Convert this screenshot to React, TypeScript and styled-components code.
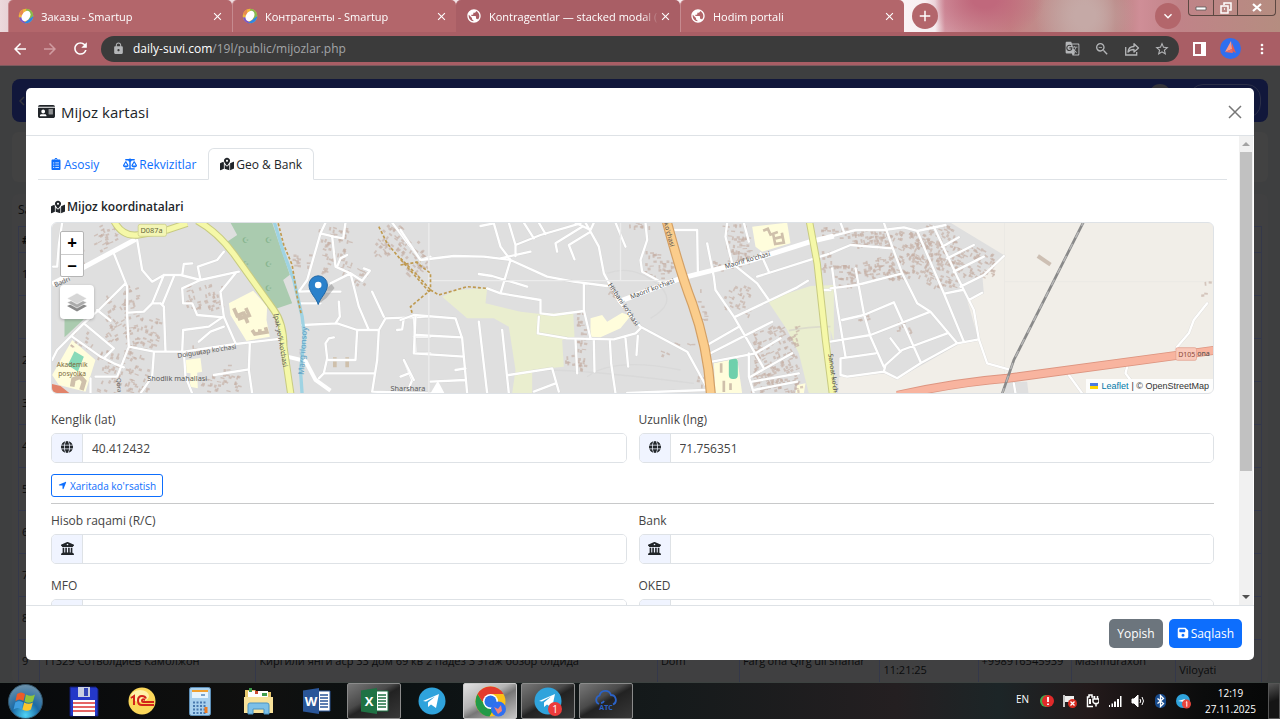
import React from "react";
import styled, { createGlobalStyle, css } from "styled-components";
import { FaIdCard, FaScaleBalanced, FaGlobe, FaBuildingColumns, FaLocationArrow, FaFloppyDisk } from "react-icons/fa6";
import { FaClipboardList, FaMapMarkedAlt } from "react-icons/fa";
import {
  MdArrowBack,
  MdArrowForward,
  MdRefresh,
  MdLock,
  MdGTranslate,
  MdZoomOut,
  MdStarBorder,
  MdPublic,
  MdClose,
  MdAdd,
  MdExpandMore,
  MdMoreVert,
} from "react-icons/md";

const GlobalStyle = createGlobalStyle`
  * { box-sizing: border-box; }
  body { margin: 0; font-family: "Open Sans", "Noto Sans", sans-serif; font-size: 12px; color: #212529; }
  button, input { font-family: inherit; }
  button { padding: 0; border: 0; background: none; color: inherit; }
`;

const Desktop = styled.div`
  display: flex;
  flex-direction: column;
  height: 100vh;
  overflow: hidden;
`;

/* ---------- browser window ---------- */

const TabStrip = styled.div`
  display: flex;
  align-items: stretch;
  height: 32px;
  flex: none;
  padding-left: 8px;
  background:
    radial-gradient(ellipse 60px 40px at 985px 0, #c0687c 0 20%, transparent),
    radial-gradient(ellipse 50px 50px at 1085px 16px, #c5a9a6 20%, transparent),
    linear-gradient(90deg, #ecd9dc 0, #e8d2d6 8px, #fbf3f5 900px, #f6eef0 935px, #d396a2 945px, #c48183 1010px, #be9390 1060px, #c4a49f 1085px, #b8807e 1115px, #cf8e97 1140px, #c08388 1180px, #b58d80 100%);
`;

const TabItem = styled.div<{ $active?: boolean }>`
  display: flex;
  align-items: center;
  flex: 0 1 224px;
  min-width: 0;
  padding: 0 8px 0 9px;
  color: #fff;
  font-size: 11px;
  background: ${(p) => (p.$active ? "#a95e65" : "#b3666b")};
  border-radius: 5px 5px 0 0;
  border-left: 1px solid ${(p) => (p.$active ? "#a95e65" : "#c68a8f")};
  svg { flex: none; }
`;

const TabTitle = styled.span`
  flex: 1;
  min-width: 0;
  margin-left: 7px;
  overflow: hidden;
  white-space: nowrap;
  mask-image: linear-gradient(90deg, #000 90%, transparent);
`;

const TabClose = styled.button`
  display: flex;
  width: 13px;
  height: 13px;
`;

const RoundButton = styled.button`
  display: grid;
  place-items: center;
  width: 26px;
  height: 26px;
  margin: 3px 0 0 8px;
  border-radius: 50%;
  background: #b3666b;
  color: #fff;
`;

const Spacer = styled.div`
  flex: 1;
`;

const WindowButtons = styled.div`
  display: flex;
  height: 16px;
  margin: 0 4px 0 7px;
  border: 1px solid #5c4842;
  border-top: 0;
  border-radius: 0 0 4px 4px;
`;

const WindowButton = styled.button<{ $wide?: boolean }>`
  display: grid;
  place-items: center;
  width: ${(p) => (p.$wide ? 38 : 24)}px;
  color: #f3ebe8;
  & + & { border-left: 1px solid #5c4842; }
`;

const Toolbar = styled.div`
  display: flex;
  align-items: center;
  height: 34px;
  flex: none;
  padding: 0 10px;
  color: #fff;
  background: #a95e65;
  border-bottom: 1px solid #7d5a5e;
`;

const NavButton = styled.button<{ $dim?: boolean }>`
  display: grid;
  place-items: center;
  width: 20px;
  height: 20px;
  margin-right: 10px;
  color: ${(p) => (p.$dim ? "#d09ca1" : "#fff")};
`;

const AddressBar = styled.div`
  display: flex;
  align-items: center;
  flex: 1;
  height: 26px;
  margin-left: 1px;
  padding: 0 9px 0 11px;
  border-radius: 13px;
  background: #3b3b3b;
  color: #b4b6b8;
`;

const AddressText = styled.span`
  flex: 1;
  margin-left: 8px;
  font-size: 12px;
  color: #a3a5a8;
  b { font-weight: 400; color: #fff; }
`;

const AddressActions = styled.div`
  display: flex;
  gap: 14px;
  button { display: flex; }
`;

const ToolbarEnd = styled.div`
  display: flex;
  align-items: center;
  gap: 13px;
  margin-left: 13px;
  button { display: flex; }
`;

/* ---------- page under the dialog ---------- */

const Page = styled.main`
  position: relative;
  flex: 1;
  min-height: 0;
  overflow: hidden;
  padding: 13px 12px 0;
  background: #3e3f40;
`;

const SiteNav = styled.div`
  display: flex;
  align-items: center;
  justify-content: space-between;
  height: 43px;
  padding: 0 7px;
  border-radius: 8px;
  background: #11173b;
  color: #34363d;
`;

const SiteAccount = styled.div`
  display: flex;
  gap: 18px;
`;

const Avatar = styled.span`
  width: 22px;
  height: 34px;
  border-radius: 11px;
  background: #34343a;
`;

const AccountButton = styled.span`
  width: 72px;
  height: 34px;
  border: 1px solid #2b2f48;
  border-radius: 14px;
`;

const FilterCard = styled.div`
  height: 50px;
  margin: 10px 0 12px;
  border-radius: 6px;
  background: #424242;
`;

const TableCard = styled.div`
  padding: 0 6px;
  border-radius: 6px;
  background: #404041;
  color: #0b0c0d;
`;

const TableTools = styled.div`
  height: 32px;
  line-height: 32px;
`;

const ClientTable = styled.table`
  width: 100%;
  table-layout: fixed;
  border-collapse: collapse;
  font-size: 11px;
  line-height: 18px;
  th, td { height: 43px; padding: 0 3px; text-align: left; border: 1px solid #34384a; }
  th { height: 26px; }
`;

/* ---------- dialog ---------- */

const Dialog = styled.section`
  position: absolute;
  inset: 22px 26px;
  display: flex;
  flex-direction: column;
  border-radius: 5px;
  background: #fff;
  overflow: hidden;
`;

const DialogHeader = styled.header`
  display: flex;
  align-items: center;
  justify-content: space-between;
  height: 48px;
  flex: none;
  padding: 0 12px;
  border-bottom: 1px solid #dee2e6;
`;

const DialogTitle = styled.h1`
  display: flex;
  align-items: center;
  gap: 6px;
  margin: 0;
  font-size: 15px;
  font-weight: 400;
`;

const CloseButton = styled.button`
  display: flex;
  color: #777;
`;

const DialogMain = styled.div`
  display: flex;
  flex: 1;
  min-height: 0;
`;

const DialogBody = styled.div`
  flex: 1;
  min-width: 0;
  overflow-y: auto;
  scrollbar-width: none;
  padding: 12px 12px 0;
`;

const ScrollTrack = styled.div`
  display: flex;
  flex-direction: column;
  align-items: center;
  width: 14px;
  margin-right: 1px;
  background: #f1f1f1;
`;

const ScrollThumb = styled.div`
  flex: 0 0 68%;
  width: 12px;
  background: #c1c1c1;
`;

const ScrollArrow = styled.span<{ $down?: boolean }>`
  height: 16px;
  display: grid;
  place-items: center;
  margin-top: ${(p) => (p.$down ? "auto" : "0")};
  &::before {
    content: "";
    border: 4px solid transparent;
    ${(p) =>
      p.$down
        ? css`border-top-color: #505050; border-bottom: 0;`
        : css`border-bottom-color: #a3a3a3; border-top: 0;`}
  }
`;

const NavTabs = styled.nav`
  display: flex;
  height: 32px;
  border-bottom: 1px solid #dee2e6;
`;

const NavTab = styled.a<{ $active?: boolean }>`
  display: flex;
  align-items: center;
  gap: 2px;
  height: 32px;
  padding: 0 11px;
  font-size: 12px;
  text-decoration: none;
  border: 1px solid transparent;
  border-radius: 6px 6px 0 0;
  color: #0d6efd;
  ${(p) =>
    p.$active &&
    css`
      color: #212529;
      background: #fff;
      border-color: #dee2e6 #dee2e6 #fff;
    `}
`;

const TabPane = styled.div`
  padding: 18px 13px 0;
`;

const SectionTitle = styled.h2`
  display: flex;
  align-items: center;
  gap: 2px;
  margin: 0 0 6px;
  font-size: 12px;
  line-height: 18px;
  font-weight: 600;
`;

const MapBox = styled.div`
  position: relative;
  height: 172px;
  border: 1px solid #dee2e6;
  border-radius: 6px;
  overflow: hidden;
  > svg { display: block; width: 100%; height: 100%; }
`;

const MapControls = styled.div`
  position: absolute;
  left: 8px;
  top: 8px;
  display: grid;
  gap: 8px;
`;

const ZoomGroup = styled.div`
  width: 24px;
  border: 1px solid #b5b5b5;
  border-radius: 2px;
  background: #fff;
  button {
    display: block;
    width: 22px;
    height: 22px;
    font-size: 17px;
    line-height: 20px;
    font-weight: 700;
    color: #000;
  }
  button + button { border-top: 1px solid #ccc; }
`;

const LayersButton = styled.button`
  display: grid;
  place-items: center;
  width: 34px;
  height: 34px;
  border-radius: 4px;
  background: #fff;
  box-shadow: 0 1px 3px rgba(0, 0, 0, 0.25);
`;

const Attribution = styled.div`
  position: absolute;
  right: 0;
  bottom: 0;
  display: flex;
  align-items: center;
  gap: 3px;
  height: 14px;
  padding: 0 4px;
  background: rgba(255, 255, 255, 0.85);
  font-family: "Liberation Sans", Arial, sans-serif;
  font-size: 9px;
  color: #333;
  a { color: #0078a8; text-decoration: none; }
`;

const FieldGrid = styled.div`
  display: grid;
  grid-template-columns: 1fr 1fr;
  gap: 13px 12px;
`;

const CoordFields = styled(FieldGrid)`
  margin: 17px 0 11px;
`;

const Field = styled.div`
  label { display: block; height: 22px; line-height: 18px; color: #444; }
`;

const InputGroup = styled.div`
  display: flex;
  height: 30px;
  border: 1px solid #dee2e6;
  border-radius: 5px;
  overflow: hidden;
`;

const InputIcon = styled.span`
  display: grid;
  place-items: center;
  width: 31px;
  padding-bottom: 2px;
  background: #f0f4ff;
  border-right: 1px solid #dee2e6;
`;

const TextInput = styled.input`
  flex: 1;
  min-width: 0;
  padding: 0 9px;
  border: 0;
  outline: 0;
  font-size: 12px;
  color: #444;
`;

const ShowOnMap = styled.button`
  display: flex;
  align-items: center;
  gap: 3px;
  height: 23px;
  padding: 0 6px;
  font-size: 10px;
  color: #0d6efd;
  border: 1px solid #0d6efd;
  border-radius: 3px;
`;

const Divider = styled.hr`
  margin: 6px 0 8px;
  border: 0;
  border-top: 1px solid #c8c9ca;
`;

const DialogFooter = styled.footer`
  display: flex;
  align-items: center;
  justify-content: flex-end;
  gap: 6px;
  height: 55px;
  flex: none;
  padding: 0 12px;
  border-top: 1px solid #dee2e6;
`;

const ActionButton = styled.button<{ $primary?: boolean }>`
  display: flex;
  align-items: center;
  gap: 2px;
  height: 29px;
  padding: 0 8px;
  font-size: 12px;
  color: #fff;
  border-radius: 5px;
  background: ${(p) => (p.$primary ? "#0d6efd" : "#6c757d")};
`;

/* ---------- taskbar ---------- */

const Taskbar = styled.div`
  display: flex;
  align-items: center;
  height: 37px;
  flex: none;
  color: #fff;
  border-top: 1px solid #3c4240;
  background: linear-gradient(90deg, #07090b, #10100f 20%, #0b1112 30%, #151a1b 52%, #241f21 70%, #1c2527 78%, #231a1b 85%, #0b0c0c 94%, #060707);
`;

const StartButton = styled.button`
  display: flex;
  margin: 0 14px 0 8px;
`;

const TaskList = styled.div`
  display: flex;
  gap: 4px;
`;

const Task = styled.button<{ $open?: boolean; $active?: boolean }>`
  display: grid;
  place-items: center;
  width: 54px;
  height: 36px;
  border: 1px solid transparent;
  border-radius: 2px;
  ${(p) =>
    p.$open &&
    css`
      border-color: #8b8b8b;
      background: linear-gradient(150deg, #777 0, #4a4a4a 40%, #222 52%, #383838);
    `}
  ${(p) =>
    p.$active &&
    css`
      border-color: #c9c9c9;
      background: linear-gradient(150deg, #e2e2e2 0, #b4b4b4 40%, #777 55%, #c6c6c6);
    `}
`;

const Tray = styled.div`
  display: flex;
  align-items: center;
  gap: 9px;
  font-size: 11px;
  svg { display: block; }
`;

const TrayLanguage = styled.span`
  margin: 0 2px 4px 0;
  font-size: 10px;
`;

const Clock = styled.div`
  margin: 0 12px 0 14px;
  text-align: center;
  font-size: 10px;
  line-height: 16px;
`;

const ShowDesktop = styled.button`
  width: 12px;
  height: 36px;
  border: 1px solid #555;
  background: linear-gradient(160deg, #555, #151515 50%);
`;

/* ---------- drawings ---------- */

const SmartupIcon = () => (
  <svg width="16" height="16" viewBox="0 0 16 16">
    <circle cx="8" cy="8" r="7.300" fill="#f0b63c" />
    <path d="M8 .7a7.300 7.300 0 0 1 7.300 7.300l-4.300 4z" fill="#86b84e" />
    <path d="M15.300 8a7.300 7.300 0 0 1-9.500 7l4.200-3z" fill="#2f86e4" />
    <path d="M.9 9.500a7.300 7.300 0 0 0 6.300 5.800l-2-6z" fill="#7a58c8" />
    <path d="M1 6a7.300 7.300 0 0 1 4-4.600L5 8z" fill="#e88a50" />
    <ellipse cx="8" cy="8" rx="4" ry="5.600" transform="rotate(32 8 8)" fill="#fff" />
  </svg>
);

const ShareIcon = () => (
  <svg width="16" height="16" viewBox="0 0 16 16" fill="none" stroke="currentColor" strokeWidth="1.300">
    <path d="M1.700 6v8h11v-3" />
    <path d="M4 11q.5-5.500 6-5.500V2.700L14.500 7 10 11V8.500Q6 8.500 4 11z" strokeLinejoin="round" />
  </svg>
);

const ProfileIcon = () => (
  <svg width="21" height="21" viewBox="0 0 21 21">
    <circle cx="10.500" cy="10.500" r="10.500" fill="#2f6ff0" />
    <path d="M11 3l1 8-7 3z" fill="#ff9a86" />
    <path d="M12 5l4 10-4-2z" fill="#e25b50" />
    <path d="M5 14l7-3 1 4z" fill="#f0695c" />
  </svg>
);

const StartOrb = () => (
  <svg width="35" height="35" viewBox="0 0 35 35">
    <defs>
      <radialGradient id="orb" cx=".5" cy=".9" r=".9">
        <stop offset="0" stopColor="#4fd4f7" />
        <stop offset=".45" stopColor="#1c6aa5" />
        <stop offset="1" stopColor="#6f93ab" />
      </radialGradient>
    </defs>
    <circle cx="17.500" cy="17.500" r="17" fill="url(#orb)" stroke="#34566b" />
    <path d="M9 10q4-3 8 0l-1.500 7q-4-3-8 0z" fill="#ee5c28" />
    <path d="M18 10.500q5 2.500 9 0l-2 7q-4 2.500-8.500 0z" fill="#8fc43c" />
    <path d="M7.200 18.500q4-3 8 0l-1.700 7q-4-3-8 0z" fill="#3f9ee0" />
    <path d="M16.200 18.500q4.500 2.500 8.700 0l-2 7q-4 2.500-8.500 0z" fill="#fbc62d" />
  </svg>
);

const FloppyTask = () => (
  <svg width="30" height="31" viewBox="0 0 30 31">
    <path d="M1 1h26l2 2v27H1z" fill="#2438c8" stroke="#101c70" />
    <path d="M9 1h12v10H9z" fill="#c9cfe0" />
    <path d="M15 2h4v8h-4z" fill="#3346b8" />
    <path d="M4 14h22v16H4z" fill="#fff" />
    <path d="M4 17h22M4 21h22M4 25h22" stroke="#d33" strokeWidth="1.500" />
  </svg>
);

const OneCTask = () => (
  <svg width="28" height="28" viewBox="0 0 28 28">
    <circle cx="14" cy="14" r="13.500" fill="#fbd75a" />
    <ellipse cx="12" cy="9" rx="9" ry="6" fill="#fff2a8" />
    <path d="M3 11l3-2v9M18 11.500q-1-2.500-4-2.500-4 0-4 4.500t4 4.500h12M17 13q-3-1.500-3 .5t3 1.500h9" fill="none" stroke="#d3241a" strokeWidth="2" />
  </svg>
);

const CalculatorTask = () => (
  <svg width="22" height="29" viewBox="0 0 22 29">
    <rect x=".5" y=".5" width="21" height="28" rx="2" fill="#a8d0ee" stroke="#5d8fb8" />
    <rect x="3" y="3" width="16" height="8" fill="#e8f4fc" />
    <path d="M3 4h16" stroke="#f0a030" strokeWidth="2" />
    <path d="M12 7h4v2h-4z" fill="#7aa4cc" />
    <path d="M4 15.500h14M4 19h14M4 22.500h14M4 26h14" stroke="#4879ae" strokeWidth="2" strokeDasharray="2 1.500" />
    <path d="M17 20v6" stroke="#ee7a20" strokeWidth="3" />
  </svg>
);

const FolderTask = () => (
  <svg width="31" height="29" viewBox="0 0 31 29">
    <path d="M2 3h10l2 2h14v21H2z" fill="#e8c86c" />
    <path d="M5 4h20v6H5z" fill="#fff" />
    <path d="M6 1h3v4H6zM19 6h5v3h-5z" fill="#3f9d4c" />
    <path d="M12 4h3v3h-3z" fill="#cf4a30" />
    <path d="M1 10h29v16H1z" fill="#f8e29a" />
    <path d="M5 27v-9q0-2 2-2h17q2 0 2 2v9h-5v-5H10v5z" fill="#7cc0e8" stroke="#4a94c4" />
  </svg>
);

const OfficeTask = ({ letter, color }: { letter: string; color: string }) => (
  <svg width="29" height="28" viewBox="0 0 29 28">
    <path d="M15 4h13v20H15z" fill="#fff" stroke={color} />
    <path d="M18 8h8M18 11h8M18 14h8M18 17h8M18 20h8" stroke={color} strokeWidth="1.500" />
    <path d="M1 3.500L17 1v26L1 24.500z" fill={color} />
    <text x="9" y="19" fontSize="13" fontWeight="700" textAnchor="middle" fill="#fff">{letter}</text>
  </svg>
);

const TelegramTask = ({ badge }: { badge?: boolean }) => (
  <svg width="29" height="29" viewBox="0 0 29 29">
    <circle cx="14" cy="14" r="13.500" fill="#2fa3dc" />
    <path d="M5 14l16-7-3 14-5-3.500-3 2.500v-4.500l7-6-9 5z" fill="#fff" />
    {badge && (
      <>
        <circle cx="21" cy="22" r="7" fill="#ec3b3b" />
        <text x="21" y="26" fontSize="10" textAnchor="middle" fill="#fff">1</text>
      </>
    )}
  </svg>
);

const ChromeTask = () => (
  <svg width="31" height="31" viewBox="0 0 31 31">
    <circle cx="15.500" cy="15.500" r="15" fill="#fbc116" />
    <path d="M2.500 8A15 15 0 0 1 28.500 8H15.500z" fill="#e33b2e" />
    <path d="M2.500 8a15 15 0 0 0 12 22.500l6-11L9 18z" fill="#229a48" />
    <path d="M2.500 8h13v7H7z" fill="#e33b2e" />
    <circle cx="15.500" cy="15.500" r="7.500" fill="#fff" />
    <circle cx="15.500" cy="15.500" r="6" fill="#2b73e8" />
    <circle cx="23.500" cy="23" r="7.500" fill="#2f6ff0" />
    <path d="M19 21l4 2 3-4 1 6-4 3z" fill="#f48375" />
  </svg>
);

const CloudTask = () => (
  <svg width="24" height="22" viewBox="0 0 24 22">
    <path d="M5 14a4.500 4.500 0 0 1 .5-8.500A6 6 0 0 1 17 5a5 5 0 0 1 2 9.500M7 13q2 0 3-2" fill="none" stroke="#2b63c8" strokeWidth="1.800" />
    <text x="12" y="20" fontSize="7" fontWeight="700" textAnchor="middle" fill="#2b63c8">ATC</text>
  </svg>
);

const LayersIcon = () => (
  <svg width="22" height="22" viewBox="0 0 22 22">
    <path d="M1 15l10-4.500L21 15l-10 5.500z" fill="#8a8a8a" />
    <path d="M1 11.500L11 7l10 4.500L11 17z" fill="#ababab" stroke="#fff" strokeWidth=".6" />
    <path d="M1 7.500L11 2l10 5.500L11 13z" fill="#d6d6d6" stroke="#fff" strokeWidth=".6" />
  </svg>
);

const FlagIcon = () => (
  <svg width="8" height="6" viewBox="0 0 8 6">
    <path d="M0 0h8v3H0z" fill="#4c7be1" />
    <path d="M0 3h8v3H0z" fill="#ffd500" />
  </svg>
);

/* Building blocks: x, y, width, height of the quarter, how many houses, street angle. */
const quarters: number[][] = [
  [92, 226, 24, 26, 26, -25], [60, 250, 22, 20, 8, -25], [122, 286, 14, 62, 40, -15], [104, 296, 24, 50, 40, -35],
  [136, 310, 24, 38, 30, 20], [96, 350, 52, 42, 80, 20], [70, 330, 26, 16, 10, 35],
  [184, 284, 38, 26, 40, -20], [176, 345, 40, 8, 8, -10], [200, 374, 38, 18, 30, 15], [292, 254, 18, 12, 12, 0],
  [318, 226, 34, 46, 60, 15], [352, 268, 14, 18, 10, 30], [374, 224, 30, 30, 46, 40], [402, 240, 26, 34, 34, 40],
  [576, 312, 8, 60, 32, 5], [564, 352, 8, 12, 7, 0], [607, 284, 8, 12, 8, 30], [642, 250, 16, 26, 18, 0],
  [658, 260, 16, 18, 16, 0], [628, 222, 20, 6, 8, 0], [722, 224, 26, 42, 60, 5], [712, 260, 14, 14, 8, 0],
  [724, 284, 26, 30, 28, 25], [752, 326, 44, 60, 150, -25], [750, 378, 50, 14, 40, -10], [690, 288, 14, 60, 14, 0],
  [655, 338, 34, 16, 6, 20], [696, 376, 10, 10, 5, 0], [820, 250, 10, 20, 14, 0], [820, 226, 28, 12, 22, 0],
  [850, 230, 40, 16, 60, -10], [888, 230, 40, 48, 130, 25], [926, 224, 30, 62, 130, 25], [956, 246, 38, 30, 70, 30],
  [832, 262, 26, 24, 50, 5], [862, 258, 36, 22, 56, -10], [850, 314, 20, 6, 8, -15], [896, 320, 16, 14, 10, -15],
  [1202, 281, 8, 3, 2, 0], [1200, 292, 4, 4, 2, 0], [213, 364, 16, 6, 3, 0],
];

const houses = (() => {
  let seed = 7;
  const next = () => (seed = (seed * 16807) % 2147483647) / 2147483647;
  return quarters.flatMap(([x, y, w, h, n, a]) =>
    Array.from({ length: n }, () => {
      const wide = 1.500 + next() * 3;
      return { x: x + next() * w, y: y + next() * h, w: wide, h: 5.500 - wide, a: a + (next() - 0.5) * 14 };
    }),
  );
})();

const westRoads =
  "M185 278L175 345 170 410 158 410M340 370L380 470 380 560 385 650 350 740 285 740M410 330L425 420 455 455 490 435 540 435 600 450 690 430 715 425M545 437L550 402 575 400M670 365L650 390 592 410 600 450M545 475L600 450M545 475L548 520 575 520 590 555 670 562M705 430L660 485 670 560 705 640M520 440L485 525M480 520L455 520 430 545 385 548M490 435L455 520M480 520L490 530 495 665M375 460L295 540 250 580 170 660 155 690M250 580L340 655 310 685M290 540L330 572M215 620L300 680 340 700 370 712M385 650L460 665 550 665 705 642 850 625M545 665L548 600 625 590 665 562M595 635L630 605 670 590M748 640L745 720 755 790M640 735L745 718M550 665L555 740 575 790M460 670L455 740 420 790M980 685L975 640 985 625 1000 622M980 685L970 730 955 745M970 730L1120 730M1070 600L1065 690 985 690M905 585L1010 580 1070 600 1135 600 1155 565 1290 560M1135 600L1130 690 1115 785 1290 790M975 278L960 310 940 380 920 450 895 485 950 483M960 310L1000 320 1028 325 1035 278M995 320L1005 410 1050 430 1085 452 1108 422 1090 415M1010 410L1020 385 1040 375M1050 430L990 460M1050 430L1075 530 1105 600M1115 485L1150 560M900 520L960 520M1015 515L1018 560 1005 580M975 485L1020 485M1175 278L1260 390 1290 380M1190 600L1205 598 1210 565M1240 560L1245 670 1290 670M1240 620L1290 620M1210 690L1235 750 1225 775M270 745L270 790";

const centreRoads =
  "M0 60L60 150 160 138 250 140 330 150 440 200 520 215 620 228M240 48L280 40 300 110 330 150M300 145L390 125M345 105L345 138M345 105L420 75 540 40M325 38L345 105M370 38L400 85M415 38L435 72M330 150L300 250M235 192L275 198 380 230M260 235L300 250 420 270 420 310 460 315 550 303M415 320L412 370 500 385 640 388 705 370 720 355M550 220L550 300 570 385M555 38L595 110 610 190 655 275 720 350 860 425 915 525M525 38L570 60 580 38M570 65L505 105 522 148M545 50L465 100 470 125M645 38L675 110M735 38L740 90 720 150 725 185 780 215M820 60L890 60 892 185M920 100L940 200 945 240 1000 320 1090 475M980 38L975 80 995 160 1070 220 1105 270M1005 320L1190 232 1222 212M1030 38L1045 95M1080 130L1105 185M1070 200L1290 130M1270 240L1290 240M920 405L1015 350M930 430L1115 335M935 455L1065 430 1140 385M1050 500L1175 430M1055 515L1195 490M1060 540L1190 515M1045 430L1045 500 1060 550M235 335L260 550M305 360L325 550M0 330L40 315 165 325 185 385 200 550M45 318L40 430 190 440M48 375L185 382M90 515L195 510M165 480L195 475M0 500L25 490M10 450L40 510M325 495L455 475 475 545M400 545L465 520M525 390L530 490M580 390L582 485M628 390L632 460 645 550M675 385L683 470M712 378L708 435M680 549L915 540";

const eastRoads =
  "M0 320L75 300 160 300 220 292 260 303 345 285M0 370L60 345 185 355M160 278L185 350 215 430 260 520 300 545 380 640M0 475L80 465 215 430M5 415L20 530 45 680M75 415L100 550 120 620 160 710M35 570L100 555 190 517 270 695M0 635L120 615 300 545M30 685L135 670M30 685L30 735 50 740 160 725M160 725L200 745 270 700 380 640 445 628M160 725L165 705 215 660 350 610M260 303L340 490 400 635M310 290L380 440 430 540 445 628 470 700 535 718M335 350L385 322M350 385L430 345M370 425L460 380M390 470L460 435 520 378M345 490L395 480M415 510L455 488M180 625L210 665M30 278L40 305M1130 520L1090 570 1075 610 1040 650 1035 670M890 710L885 730 900 750M715 735L755 790M550 760L555 790";

const west = "translate(0 130) scale(.33333)";
const centre = "translate(400 210) scale(.33333)";
const east = "translate(830 130) scale(.33333)";

const StreetMap = () => (
  <svg viewBox="51 223 1162 170" preserveAspectRatio="xMidYMid slice" fontFamily="Noto Sans" fill="none">
    <rect x="0" y="200" width="1280" height="220" fill="#dfdfdf" />
    <g transform={west}>
      <path d="M690 278H815L868 434 848 450 875 520 822 538 680 335 710 315z" fill="#aacbaf" />
      <path d="M192 568h58l-58 54z" fill="#aacbaf" />
      <path d="M685 520L758 482 800 530 798 570 808 620 738 633 690 555zM215 630L285 690 255 785 175 765 155 735zM555 690L600 684 605 725 590 728 592 775 568 770 570 730 556 728z" fill="#fffddc" />
      <path d="M222 664L250 680 232 725 202 705z" fill="#88dab9" />
      <path d="M153 762L180 768 210 792H153z" fill="#e2836a" />
      <path d="M700 535l10 22 20-8M712 568l34-12-10-22M728 545l14 34M755 600l8 12 36-6-4-14M778 598v10M1003 682v30M1040 682v30" stroke="#cfc0ab" strokeWidth="11" />
      <path d="M215 770l4-22 20-8 12 14-8 26" stroke="#cfc0ab" strokeWidth="14" />
      <g fill="#86b48d" fontSize="24">
        <text x="724" y="340">☪</text>
        <text x="795" y="340">☪</text>
        <text x="724" y="412">☪</text>
        <text x="795" y="412">☪</text>
        <text x="795" y="482">☪</text>
      </g>
    </g>
    <g transform={centre}>
      <path d="M125 260L165 240 260 235 255 280 360 305 420 312 518 305 522 380 485 390 490 470 395 480 395 550 335 550 345 480 325 350 280 325 200 325zM1100 270L1230 228 1300 225V550H1225L1195 430 1160 360z" fill="#eaeecf" />
      <path d="M570 325L605 315 620 335 665 308 690 318 660 355 600 382 570 380zM1055 50L1160 38 1170 100 1085 125 1065 110zM940 460L1010 445 1025 550 945 550zM1190 525L1215 520 1210 550 1185 550z" fill="#fffddc" />
      <rect x="985" y="445" width="27" height="62" rx="12" fill="#6fd0ac" />
      <path d="M1165 362Q1220 350 1290 350" stroke="#dcdccc" strokeWidth="5" />
      <path d="M1088 62l14-6 8 18 22-8M1118 72l6 30 26-4-6-30M1122 86l24-6M962 460v28M970 512v34M990 520v20" stroke="#cfc0ab" strokeWidth="8" />
      <path d="M430 480Q560 480 880 520M560 500Q640 440 840 480M620 190q80-30 160 40 50 50-30 95" stroke="#d9d9d9" strokeWidth="4" />
    </g>
    <g transform={east}>
      <path d="M360 278L520 375 455 430 460 490 410 510 445 632 385 642 200 748 160 730 25 742 22 800H1200V270z" fill="#f1eee8" />
      <path d="M530 755H590L595 800H515z" fill="#dfdfdf" />
      <path d="M0 600L22 680V800H0z" fill="#dfdfdf" />
      <path d="M522 278V790M522 455H1150" stroke="#ebe9e4" strokeWidth="3" />
      <path d="M622 378L660 404" stroke="#cdbfb3" strokeWidth="12" />
    </g>
    <g fill="#c4afa4">
      {houses.map((b, i) => (
        <rect key={i} x={b.x} y={b.y} width={b.w} height={b.h} opacity=".65" transform={`rotate(${b.a} ${b.x} ${b.y})`} />
      ))}
    </g>
    <g strokeLinejoin="round" strokeLinecap="round">
      {[
        [west, westRoads],
        [centre, centreRoads],
        [east, eastRoads],
      ].map(([place, roads]) => (
        <g key={place} transform={place}>
          <path d={roads} stroke="#cfcfcf" strokeWidth="9" opacity=".6" />
          <path d={roads} stroke="#fff" strokeWidth="7" />
        </g>
      ))}
    </g>
    <g transform={centre} stroke="#ececec" strokeWidth="4">
      <path d="M85 38V550M660 38V212M85 212H830" />
    </g>
    <g transform={west}>
      <path d="M155 462L250 412 405 328" stroke="#fff" strokeWidth="15" />
      <path d="M860 680L915 693 945 750 990 782" stroke="#fff" strokeWidth="12" />
      <path d="M822 278L850 370 880 450 905 560 912 620 900 720 905 795" stroke="#9fd3e3" strokeWidth="10" />
      <path d="M833 280L850 345 875 405 890 500 903 555M1135 290L1160 340 1210 400 1255 450 1290 490M1200 405L1260 395" stroke="#bf9a50" strokeWidth="5" strokeDasharray="9 6" />
      {[["#c8cb82", 22], ["#f5f8a8", 16]].map(([c, w]) => (
        <path key={c} d="M340 272Q365 320 410 315L500 300 560 280M590 272Q650 305 700 372L820 540Q850 580 850 650L872 800" stroke={c} strokeWidth={w} />
      ))}
      <rect x="413" y="283" width="85" height="36" rx="6" fill="#f3f5b4" stroke="#c9cb80" strokeWidth="2" />
      <g fill="#5a5a5a" fontSize="22">
        <text x="420" y="310" fill="#66683a">D087a</text>
        <text x="440" y="752">Shodlik mahallasi</text>
        <text x="1170" y="782">Sharshara</text>
        <text transform="translate(532 684) rotate(-9)" fontSize="20">Doiguutap ko'chasi</text>
        <text transform="translate(165 472) rotate(-25)" fontSize="20">Badri</text>
        <text transform="translate(820 552) rotate(80)" fontSize="20">Ipak yo'li ko'chasi</text>
        <text transform="translate(910 735) rotate(-86)" fontSize="24" fill="#5c9fc4">Marg'ilonsoy</text>
        <text transform="translate(348 745) rotate(86)" fontSize="18">Qora</text>
        <text x="215" y="712" fontSize="20" textAnchor="middle" fill="#7d6a3c">Akademik</text>
        <text x="215" y="738" fontSize="20" textAnchor="middle" fill="#7d6a3c">posyolka</text>
      </g>
    </g>
    <g transform={centre}>
      <path d="M90 550L112 512 132 550z" fill="#fff" />
      <path d="M0 145L45 190 90 240M45 155L90 190 90 240 30 290 35 310M90 240L115 255 200 230 260 235" stroke="#bf9a50" strokeWidth="5" strokeDasharray="9 6" />
      <path d="M655 275L840 205 1040 155 1230 95 1300 78" stroke="#fff" strokeWidth="15" />
      {[["#d3a065", 30], ["#fbcd8c", 23]].map(([c, w]) => (
        <path key={c} d="M795 20Q840 190 875 280Q925 420 932 570" stroke={c} strokeWidth={w} />
      ))}
      {[["#c8cb82", 22], ["#f5f8a8", 16]].map(([c, w]) => (
        <path key={c} d="M1226 30L1250 160 1275 390 1298 570" stroke={c} strokeWidth={w} />
      ))}
      <g fill="#4d4d4d" fontSize="20">
        <text transform="translate(790 40) rotate(75)">ko'chasi</text>
        <text transform="translate(692 268) rotate(-21)">Maorif ko'chasi</text>
        <text transform="translate(975 176) rotate(-16)">Maorif ko'chasi</text>
        <text transform="translate(622 225) rotate(56)">Hisbani ko'chasi</text>
        <text transform="translate(1283 432) rotate(82)">Sanoat ko'chasi</text>
      </g>
    </g>
    <g transform={east}>
      {[["#dd9580", 27], ["#f8b49f", 22]].map(([c, w]) => (
        <path key={c} d="M200 796Q380 757 530 745L1160 660" stroke={c} strokeWidth={w} />
      ))}
      <path d="M762 270L550 690 512 800" stroke="#8a8a8a" strokeWidth="8" />
      <path d="M762 270L550 690 512 800" stroke="#b8b8b8" strokeWidth="4" strokeDasharray="20 20" />
      <rect x="1036" y="653" width="62" height="38" rx="5" fill="#f9c9ba" stroke="#df9c88" strokeWidth="2" />
      <text x="1043" y="682" fontSize="21" fill="#8c4a38">D105</text>
      <text x="1100" y="678" fontSize="21" fill="#4d4d4d">ona</text>
    </g>
    <path d="M318 304l8-6 8-10-3-4-9 8z" fill="#777" opacity=".4" />
    <path d="M317.700 304.500C316 298 308.500 292.500 308.500 285a9.200 9.200 0 0 1 18.400 0C326.900 292.500 319.400 298 317.700 304.500z" fill="#2a81cb" stroke="#2268a5" />
    <circle cx="317.700" cy="285" r="3.300" fill="#fff" />
  </svg>
);

/* ---------- parts with content ---------- */

const browserTabs = [
  { title: "Заказы - Smartup", smartup: true },
  { title: "Контрагенты - Smartup", smartup: true },
  { title: "Kontragentlar — stacked modal (", active: true },
  { title: "Hodim portali" },
];

const BrowserTabs = () => (
  <TabStrip>
    {browserTabs.map((t) => (
      <TabItem key={t.title} $active={t.active}>
        {t.smartup ? <SmartupIcon /> : <MdPublic size={16} />}
        <TabTitle>{t.title}</TabTitle>
        <TabClose aria-label="Close tab"><MdClose size={13} /></TabClose>
      </TabItem>
    ))}
    <RoundButton aria-label="New tab"><MdAdd size={18} /></RoundButton>
    <Spacer />
    <RoundButton aria-label="Search tabs"><MdExpandMore size={16} /></RoundButton>
    <WindowButtons>
      <WindowButton aria-label="Minimize">
        <svg width="12" height="6"><path d="M1 2h10v3H1z" fill="#fff" stroke="#555" strokeWidth=".8" /></svg>
      </WindowButton>
      <WindowButton aria-label="Restore">
        <svg width="12" height="12" fill="none" stroke="#fff" strokeWidth="1.500"><path d="M4 3V1h7v7H9M1 4h7v7H1zM4 7h1" /></svg>
      </WindowButton>
      <WindowButton $wide aria-label="Close">
        <svg width="10" height="9"><path d="M1 1l8 7M9 1L1 8" stroke="#fff" strokeWidth="2.200" /></svg>
      </WindowButton>
    </WindowButtons>
  </TabStrip>
);

const BrowserToolbar = () => (
  <Toolbar>
    <NavButton aria-label="Back"><MdArrowBack size={18} /></NavButton>
    <NavButton $dim aria-label="Forward"><MdArrowForward size={18} /></NavButton>
    <NavButton aria-label="Reload"><MdRefresh size={19} /></NavButton>
    <AddressBar>
      <MdLock size={13} />
      <AddressText><b>daily-suvi.com</b>/19l/public/mijozlar.php</AddressText>
      <AddressActions>
        <button aria-label="Translate"><MdGTranslate size={15} /></button>
        <button aria-label="Zoom"><MdZoomOut size={16} /></button>
        <button aria-label="Share"><ShareIcon /></button>
        <button aria-label="Bookmark"><MdStarBorder size={16} /></button>
      </AddressActions>
    </AddressBar>
    <ToolbarEnd>
      <button aria-label="Side panel">
        <svg width="15" height="14"><path d="M2 1h11v12H2z" fill="none" stroke="#fff" strokeWidth="2" /><path d="M9 1h5v12H9z" fill="#fff" /></svg>
      </button>
      <button aria-label="Profile"><ProfileIcon /></button>
      <button aria-label="Menu"><MdMoreVert size={16} /></button>
    </ToolbarEnd>
  </Toolbar>
);

const lastRow = [
  "11329 Сотволдиев Камолжон",
  "Киргили янги аср 33 дом 69 кв 2 падез 3 этаж бозор олдида",
  "Dom",
  "Farg'ona Qirg'uli shahar",
  "27.11.2025 11:21:25",
  "+998916545939",
  "Mashhuraxon",
  "Farg'ona Viloyati",
];

const columnShares = ["1.7%", "17.4%", "32.3%", "6.6%", "11.3%", "7.9%", "7.5%", "8.4%", "6.9%"];

const Clients = () => (
  <TableCard>
    <TableTools>Sahifada</TableTools>
    <ClientTable>
      <colgroup>{columnShares.map((w, i) => <col key={i} style={{ width: w }} />)}</colgroup>
      <thead>
        <tr><th>#</th>{lastRow.map((c) => <th key={c} />)}</tr>
      </thead>
      <tbody>
        {["1", "", "2", "3", "4", "5", "6", "7", "8", "9"].map((n) => (
          <tr key={n}>
            <td>{n}</td>
            {lastRow.map((c) => <td key={c}>{n === "9" ? c : ""}</td>)}
          </tr>
        ))}
      </tbody>
    </ClientTable>
  </TableCard>
);

type IconFieldProps = { id: string; label: string; icon: React.ReactNode; value?: string };

const IconField = ({ id, label, icon, value = "" }: IconFieldProps) => (
  <Field>
    <label htmlFor={id}>{label}</label>
    <InputGroup>
      <InputIcon>{icon}</InputIcon>
      <TextInput id={id} defaultValue={value} />
    </InputGroup>
  </Field>
);

const ClientDialog = () => (
  <Dialog role="dialog" aria-labelledby="dialog-title">
    <DialogHeader>
      <DialogTitle id="dialog-title"><FaIdCard size={17} />Mijoz kartasi</DialogTitle>
      <CloseButton aria-label="Yopish">
        <svg width="14" height="14" viewBox="0 0 14 14"><path d="M1 1l12 12M13 1L1 13" stroke="currentColor" strokeWidth="1.500" /></svg>
      </CloseButton>
    </DialogHeader>
    <DialogMain>
      <DialogBody>
        <NavTabs>
          <NavTab href="#asosiy"><FaClipboardList size={12} />Asosiy</NavTab>
          <NavTab href="#rekvizitlar"><FaScaleBalanced size={14} />Rekvizitlar</NavTab>
          <NavTab href="#geo" $active><FaMapMarkedAlt size={14} />Geo &amp; Bank</NavTab>
        </NavTabs>
        <TabPane>
          <SectionTitle><FaMapMarkedAlt size={14} />Mijoz koordinatalari</SectionTitle>
          <MapBox>
            <StreetMap />
            <MapControls>
              <ZoomGroup>
                <button aria-label="Zoom in">+</button>
                <button aria-label="Zoom out">−</button>
              </ZoomGroup>
              <LayersButton aria-label="Layers"><LayersIcon /></LayersButton>
            </MapControls>
            <Attribution>
              <FlagIcon />
              <a href="#leaflet">Leaflet</a>
              <span>| © OpenStreetMap</span>
            </Attribution>
          </MapBox>
          <CoordFields>
            <IconField id="lat" label="Kenglik (lat)" icon={<FaGlobe size={12} />} value="40.412432" />
            <IconField id="lng" label="Uzunlik (lng)" icon={<FaGlobe size={12} />} value="71.756351" />
          </CoordFields>
          <ShowOnMap><FaLocationArrow size={9} />Xaritada ko'rsatish</ShowOnMap>
          <Divider />
          <FieldGrid>
            <IconField id="account" label="Hisob raqami (R/C)" icon={<FaBuildingColumns size={13} />} />
            <IconField id="bank" label="Bank" icon={<FaBuildingColumns size={13} />} />
            <IconField id="mfo" label="MFO" icon={null} />
            <IconField id="oked" label="OKED" icon={null} />
          </FieldGrid>
        </TabPane>
      </DialogBody>
      <ScrollTrack aria-hidden>
        <ScrollArrow />
        <ScrollThumb />
        <ScrollArrow $down />
      </ScrollTrack>
    </DialogMain>
    <DialogFooter>
      <ActionButton>Yopish</ActionButton>
      <ActionButton $primary><FaFloppyDisk size={12} />Saqlash</ActionButton>
    </DialogFooter>
  </Dialog>
);

const TrayIcons = () => (
  <>
    <svg width="14" height="14"><circle cx="6" cy="7" r="6" fill="#3fae49" /><circle cx="8" cy="7" r="6" fill="#e02a2a" /><path d="M8 3v5M8 9.500v1.500" stroke="#fff" strokeWidth="1.800" /></svg>
    <svg width="14" height="14"><path d="M1 1v12" stroke="#fff" strokeWidth="1.500" /><path d="M2 2h9v6H2z" fill="#eee" /><circle cx="9.500" cy="9.500" r="4.500" fill="#d92b20" /><path d="M7.500 7.500l4 4M11.500 7.500l-4 4" stroke="#fff" strokeWidth="1.300" /></svg>
    <svg width="13" height="14" fill="none" stroke="#fff" strokeWidth="1.500"><path d="M7 12.500H1.500V3H3V1h3v2h1.500M8.500 2v3M11.500 2v3M7 5h6v3l-1.500 1.500h-3L7 8zM10 10v2.500" /><path d="M4 5v5" strokeWidth="2" /></svg>
    <svg width="14" height="14" fill="#fff"><path d="M1 11h1v2H1zM3.500 9.500h1.500v3.500H3.500zM6 7.500h2v5.500H6zM9 5h2v8H9zM12 2h1.500v11H12z" /></svg>
    <svg width="14" height="14" fill="none" stroke="#fff"><path d="M1 5h2l4-4v12L3 9H1z" fill="#fff" /><path d="M9 5q1.500 2 0 4M11 3q3 4 0 8" /></svg>
    <svg width="13" height="14"><rect x="1" width="11" height="14" rx="5" fill="#174a8c" /><path d="M3.500 4.500l6 5-3 3V1.500l3 3-6 5" fill="none" stroke="#fff" strokeWidth="1.300" /></svg>
    <svg width="15" height="15"><circle cx="7" cy="7" r="7" fill="#2fa3dc" /><path d="M2 7l7-2-1 3z" fill="#fff" /><circle cx="10.500" cy="10" r="4.500" fill="#e8453c" /><path d="M9.800 8.500l1-.8v5" stroke="#fff" fill="none" /></svg>
  </>
);

const DesktopTaskbar = () => (
  <Taskbar>
    <StartButton aria-label="Start"><StartOrb /></StartButton>
    <TaskList>
      <Task aria-label="Backup"><FloppyTask /></Task>
      <Task aria-label="1C"><OneCTask /></Task>
      <Task aria-label="Calculator"><CalculatorTask /></Task>
      <Task aria-label="Explorer"><FolderTask /></Task>
      <Task aria-label="Word"><OfficeTask letter="W" color="#2a5699" /></Task>
      <Task $open aria-label="Excel"><OfficeTask letter="X" color="#1f7244" /></Task>
      <Task aria-label="Telegram"><TelegramTask /></Task>
      <Task $open $active aria-label="Chrome"><ChromeTask /></Task>
      <Task $open aria-label="Telegram chats"><TelegramTask badge /></Task>
      <Task $open aria-label="ATC"><CloudTask /></Task>
    </TaskList>
    <Spacer />
    <Tray>
      <TrayLanguage>EN</TrayLanguage>
      <TrayIcons />
    </Tray>
    <Clock>12:19<br />27.11.2025</Clock>
    <ShowDesktop aria-label="Show desktop" />
  </Taskbar>
);

export default function App() {
  return (
    <Desktop>
      <GlobalStyle />
      <BrowserTabs />
      <BrowserToolbar />
      <Page>
        <SiteNav>
          <svg width="6" height="10" viewBox="0 0 6 10"><path d="M5 1L1 5l4 4" fill="none" stroke="currentColor" strokeWidth="1.500" /></svg>
          <SiteAccount>
            <Avatar />
            <AccountButton />
          </SiteAccount>
        </SiteNav>
        <FilterCard />
        <Clients />
        <ClientDialog />
      </Page>
      <DesktopTaskbar />
    </Desktop>
  );
}
